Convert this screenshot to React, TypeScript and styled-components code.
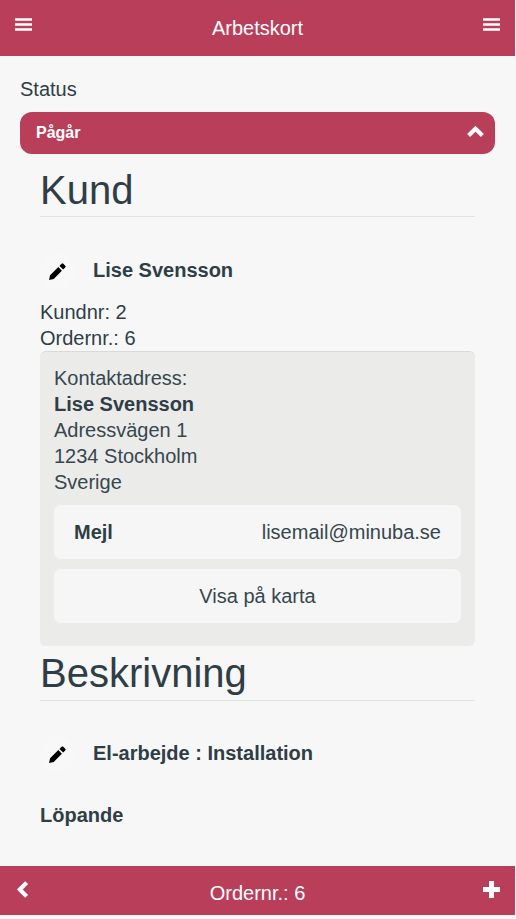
import React from 'react';
import styled, { createGlobalStyle } from 'styled-components';

const GlobalStyle = createGlobalStyle`
  *, *::before, *::after { box-sizing: border-box; }
  body {
    margin: 0;
    background: #f7f7f7;
    color: #2f3e46;
    font: 20px/26px "Liberation Sans", Arial, sans-serif;
  }
`;

const brand = '#b93e5a';

const Page = styled.div`
  width: 515px;
  height: 915px;
  display: flex;
  flex-direction: column;
`;

const Bar = styled.header<{ $height: number }>`
  height: ${(p) => p.$height}px;
  flex: none;
  display: flex;
  align-items: flex-start;
  justify-content: space-between;
  padding: 15px 15px 0;
  background: ${brand};
  color: #fff;
`;

const BarTitle = styled.div<{ $lineHeight?: number }>`
  line-height: ${(p) => p.$lineHeight ?? 26}px;
`;

const BarButton = styled.button`
  width: 17px;
  height: 17px;
  padding: 0;
  border: 0;
  background: none;
  color: inherit;
  svg { display: block; }
`;

const Main = styled.main`
  flex: 1;
  padding: 20px 20px 0;
`;

const Status = styled.div`
  height: 36px;
`;

const StatusToggle = styled.div`
  height: 42px;
  display: flex;
  align-items: flex-start;
  justify-content: space-between;
  padding: 8px 11px 0 16px;
  border-radius: 12px;
  background: ${brand};
  color: #fff;
  font-size: 16px;
  font-weight: bold;
  svg { display: block; margin-top: 6px; }
`;

const Section = styled.section`
  padding: 0 20px;
`;

const Heading = styled.h1<{ $height: number; $gap: number; $lift: number }>`
  margin: 0 0 ${(p) => p.$gap}px;
  height: ${(p) => p.$height}px;
  display: flex;
  align-items: flex-end;
  padding-bottom: ${(p) => p.$lift}px;
  border-bottom: 1px solid #e2e2e2;
  font-size: 40px;
  font-weight: normal;
  line-height: 46px;
`;

const EditRow = styled.div`
  height: 36px;
  display: flex;
  font-weight: bold;
`;

const EditButton = styled.button`
  width: 35px;
  height: 37px;
  margin-right: 18px;
  display: flex;
  align-items: center;
  justify-content: center;
  padding: 0;
  border: 0;
  border-radius: 50%;
  background: #f8f8f8;
  color: #000;
`;

const RowLabel = styled.div`
  padding-top: 4px;
  height: 34px;
`;

const Meta = styled.div`
  padding-top: 10px;
  height: 62px;
`;

const Card = styled.div`
  height: 295px;
  padding: 13px 14px 0;
  border: solid #d9dadb;
  border-width: 1px 0 0;
  border-radius: 6px;
  background: #ebebe9;
`;

const Address = styled.div`
  height: 140px;
  color: #37474f;
`;

const Strong = styled.div`
  color: #2f3e46;
  font-weight: bold;
`;

const CardButton = styled.div<{ $centered?: boolean }>`
  height: 54px;
  margin-bottom: 10px;
  display: flex;
  align-items: center;
  justify-content: ${(p) => (p.$centered ? 'center' : 'space-between')};
  padding: 0 20px;
  border-radius: 7px;
  background: #f6f6f6;
  color: #37474f;
`;

const Note = styled.div`
  padding-top: 30px;
  font-weight: bold;
`;

function MenuIcon() {
  return (
    <svg width="17" height="17" viewBox="0 0 17 17" fill="#fff">
      <path d="M0 3.3h17v2.4H0zM0 8.3h17v2.4H0zM0 13.3h17v2.4H0z" />
    </svg>
  );
}

function PencilIcon() {
  return (
    <svg width="17" height="17" viewBox="0 0 17 17" fill="currentColor">
      <path d="M0 17 1.1 12.2 9.3 4.1 12.9 7.7 4.7 15.9ZM10.5 2.9 11.8 1.6 15.4 5.2 14.1 6.5ZM12.6.8Q13.4-.1 14.3.8L16.2 2.7Q17.1 3.6 16.2 4.4L15.4 5.2 11.8 1.6Z" />
    </svg>
  );
}

function ChevronUp() {
  return (
    <svg width="17" height="12" viewBox="0 0 17 12" fill="none" stroke="#fff" strokeWidth="4.2">
      <path d="M1.6 9.4 8.5 2.7 15.4 9.4" />
    </svg>
  );
}

function ChevronLeft() {
  return (
    <svg width="17" height="17" viewBox="0 0 17 17" fill="none" stroke="#fff" strokeWidth="4.2">
      <path d="M11.6 1.6 4.8 8.5 11.6 15.4" />
    </svg>
  );
}

function PlusIcon() {
  return (
    <svg width="17" height="17" viewBox="0 0 17 17" fill="#fff">
      <path d="M6 0h5v6h6v5h-6v6H6v-6H0V6h6z" />
    </svg>
  );
}

export default function App() {
  return (
    <>
      <GlobalStyle />
      <Page>
        <Bar $height={56}>
          <BarButton aria-label="Meny"><MenuIcon /></BarButton>
          <BarTitle>Arbetskort</BarTitle>
          <BarButton aria-label="Alternativ"><MenuIcon /></BarButton>
        </Bar>
        <Main>
          <Status>Status</Status>
          <StatusToggle>
            Pågår
            <ChevronUp />
          </StatusToggle>
          <Section>
            <Heading $height={63} $gap={36} $lift={3}>Kund</Heading>
            <EditRow>
              <EditButton aria-label="Redigera kund"><PencilIcon /></EditButton>
              <RowLabel>Lise Svensson</RowLabel>
            </EditRow>
            <Meta>
              <div>Kundnr: 2</div>
              <div>Ordernr.: 6</div>
            </Meta>
            <Card>
              <Address>
                <div>Kontaktadress:</div>
                <Strong>Lise Svensson</Strong>
                <div>Adressvägen 1</div>
                <div>1234 Stockholm</div>
                <div>Sverige</div>
              </Address>
              <CardButton>
                <Strong>Mejl</Strong>
                <span>lisemail@minuba.se</span>
              </CardButton>
              <CardButton $centered>Visa på karta</CardButton>
            </Card>
            <Heading $height={55} $gap={35} $lift={4}>Beskrivning</Heading>
            <EditRow>
              <EditButton aria-label="Redigera beskrivning"><PencilIcon /></EditButton>
              <RowLabel>El-arbejde : Installation</RowLabel>
            </EditRow>
            <Note>Löpande</Note>
          </Section>
        </Main>
        <Bar as="footer" $height={49}>
          <BarButton aria-label="Tillbaka"><ChevronLeft /></BarButton>
          <BarTitle $lineHeight={24}>Ordernr.: 6</BarTitle>
          <BarButton aria-label="Lägg till"><PlusIcon /></BarButton>
        </Bar>
      </Page>
    </>
  );
}
